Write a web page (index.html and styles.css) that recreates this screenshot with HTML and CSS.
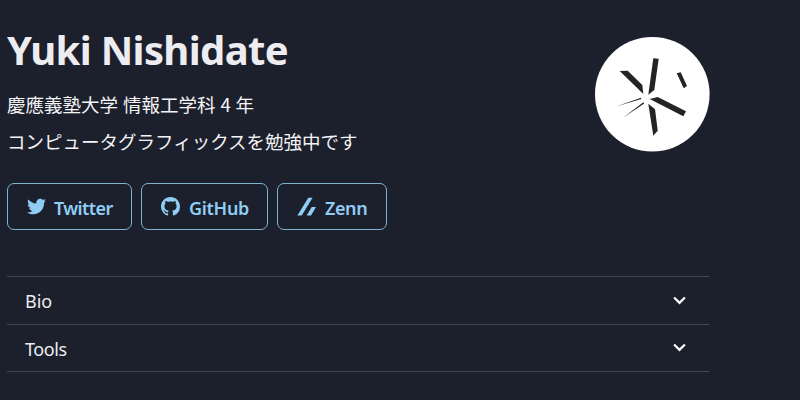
FILE: index.html
```html
<!DOCTYPE html>
<html lang="ja">
<head>
<meta charset="utf-8">
<title>Yuki Nishidate</title>
<link rel="stylesheet" href="styles.css">
</head>
<body>
<main class="page">
  <header class="profile">
    <div class="intro">
      <h1 class="name">Yuki Nishidate</h1>
      <p class="line school">慶應義塾大学 情報工学科 4 年</p>
      <p class="line">コンピュータグラフィックスを勉強中です</p>
    </div>
    <svg class="avatar" viewBox="0 0 115 115" aria-hidden="true">
      <circle cx="57.3" cy="57.3" r="57.3" fill="#fff"/>
      <g fill="#242424">
        <path d="M24.7 34 32.7 33.7 47.3 48 48.3 57Z"/>
        <path d="M58.3 21.3 63.7 21.7 59.3 53 53.3 57.7Z"/>
        <path d="M81.7 36.3 85.7 35.3 92 49 88.7 51.3Z"/>
        <path d="M54.7 62 62.7 60 91 74.3 88.3 79.3Z"/>
        <path d="M53.3 66.7 60 72.3 62.7 93.7 58.3 98.7Z"/>
        <path d="M21 69.5 46 60.7 46.4 62.1Z"/>
        <path d="M27.7 81 48.3 65.2 49.2 66.4Z"/>
      </g>
    </svg>
  </header>
  <nav class="links">
    <a class="button twitter">
      <svg class="icon" viewBox="0 0 512 512"><path d="M459.4 151.7c.3 4.5.3 9.100.3 13.600 0 138.700-105.600 298.600-298.600 298.600-59.500 0-114.700-17.200-161.100-47.100 8.400 1 16.600 1.300 25.300 1.300 49.100 0 94.200-16.600 130.300-44.800-46.100-1-84.800-31.200-98.100-72.800 6.500 1 13 1.600 19.800 1.600 9.400 0 18.800-1.300 27.600-3.600-48.100-9.700-84.100-52-84.100-103v-1.300c14 7.800 30.200 12.700 47.400 13.300-28.300-18.800-46.800-51-46.800-87.400 0-19.500 5.200-37.400 14.300-53 51.700 63.700 129.300 105.300 216.400 109.800-1.600-7.800-2.600-15.900-2.600-24 0-57.800 46.800-104.900 104.900-104.900 30.200 0 57.500 12.700 76.700 33.100 23.700-4.500 46.500-13.300 66.600-25.300-7.800 24.400-24.400 44.800-46.100 57.800 21.100-2.300 41.600-8.100 60.400-16.200-14.300 20.800-32.200 39.300-52.600 54.300z"/></svg>
      <span>Twitter</span>
    </a>
    <a class="button github">
      <svg class="icon" viewBox="0 0 16 16"><path d="M8 0C3.580 0 0 3.580 0 8c0 3.540 2.290 6.530 5.470 7.590.4.070.55-.17.55-.38 0-.19-.01-.82-.01-1.490-2.010.37-2.530-.49-2.690-.94-.09-.23-.48-.94-.82-1.130-.28-.15-.68-.52-.01-.53.63-.01 1.080.58 1.230.82.72 1.210 1.870.87 2.330.66.070-.52.280-.87.510-1.070-1.780-.2-3.640-.89-3.640-3.950 0-.87.310-1.590.82-2.150-.08-.2-.36-1.020.08-2.120 0 0 .67-.21 2.200.82.64-.18 1.320-.27 2-.27s1.360.09 2 .27c1.530-1.040 2.200-.82 2.200-.82.44 1.100.16 1.920.08 2.120.51.560.82 1.270.82 2.150 0 3.070-1.870 3.750-3.650 3.950.29.250.54.730.54 1.480 0 1.070-.01 1.930-.01 2.200 0 .21.150.46.55.38A8.010 8.010 0 0 0 16 8c0-4.420-3.580-8-8-8z"/></svg>
      <span>GitHub</span>
    </a>
    <a class="button zenn">
      <svg class="icon" viewBox="0 0 19 19"><path d="M.4 18.500H4.700L15.600.7H11.300ZM9.600 18.500H14L19 10H14.700Z"/></svg>
      <span>Zenn</span>
    </a>
  </nav>
  <section class="accordion">
    <div class="row"><span>Bio</span><svg class="chevron" viewBox="0 0 12 8"><path d="M1 1.200 6 6.200 11 1.200"/></svg></div>
    <div class="row"><span class="tools">Tools</span><svg class="chevron" viewBox="0 0 12 8"><path d="M1 1.200 6 6.200 11 1.200"/></svg></div>
  </section>
</main>
</body>
</html>
```
FILE: styles.css
```css
* { box-sizing: border-box; }
body {
  margin: 0;
  height: 400px;
  overflow: hidden;
  background: #1c202c;
  color: #ededf1;
  font-family: "Noto Sans", "Noto Sans CJK JP", sans-serif;
  font-size: 18px;
}
.page { width: 703px; margin-left: 7px; padding-top: 23px; }
.profile { display: flex; justify-content: space-between; height: 160px; }
.name {
  margin: 0 0 9px;
  font-size: 40px;
  line-height: 54px;
  font-weight: 700;
  letter-spacing: -0.65px;
  white-space: nowrap;
}
.line {
  margin: 0;
  color: #f4f4f6;
  font-family: "Noto Sans CJK JP", sans-serif;
  font-size: 18.5px;
  line-height: 37px;
  white-space: nowrap;
}
.school { word-spacing: 0.8px; }
.avatar { width: 115px; height: 115px; margin-top: 14px; flex: none; }
.links { display: flex; gap: 9px; height: 47px; }
.button {
  display: flex;
  align-items: center;
  gap: 9px;
  padding: 2px 0 0 19px;
  border: 1px solid #7fb3cf;
  border-radius: 7px;
  color: #90cdf4;
  font-size: 18px;
  font-weight: 600;
  letter-spacing: -0.3px;
  white-space: nowrap;
}
.twitter { width: 125px; gap: 8px; letter-spacing: -0.6px; }
.github { width: 127px; }
.zenn { width: 110px; letter-spacing: -0.4px; }
.icon { width: 19px; height: 19px; margin-top: -2px; fill: currentColor; flex: none; }
.accordion { width: 702px; margin-top: 46px; border-bottom: 1px solid #414550; }
.row {
  display: flex;
  align-items: center;
  justify-content: space-between;
  height: 47.5px;
  padding: 2px 23px 0 18px;
  border-top: 1px solid #414550;
}
.tools { letter-spacing: -0.4px; }
.chevron { width: 13px; height: 9px; margin-top: -2px; fill: none; stroke: #fff; stroke-width: 2; }
```
